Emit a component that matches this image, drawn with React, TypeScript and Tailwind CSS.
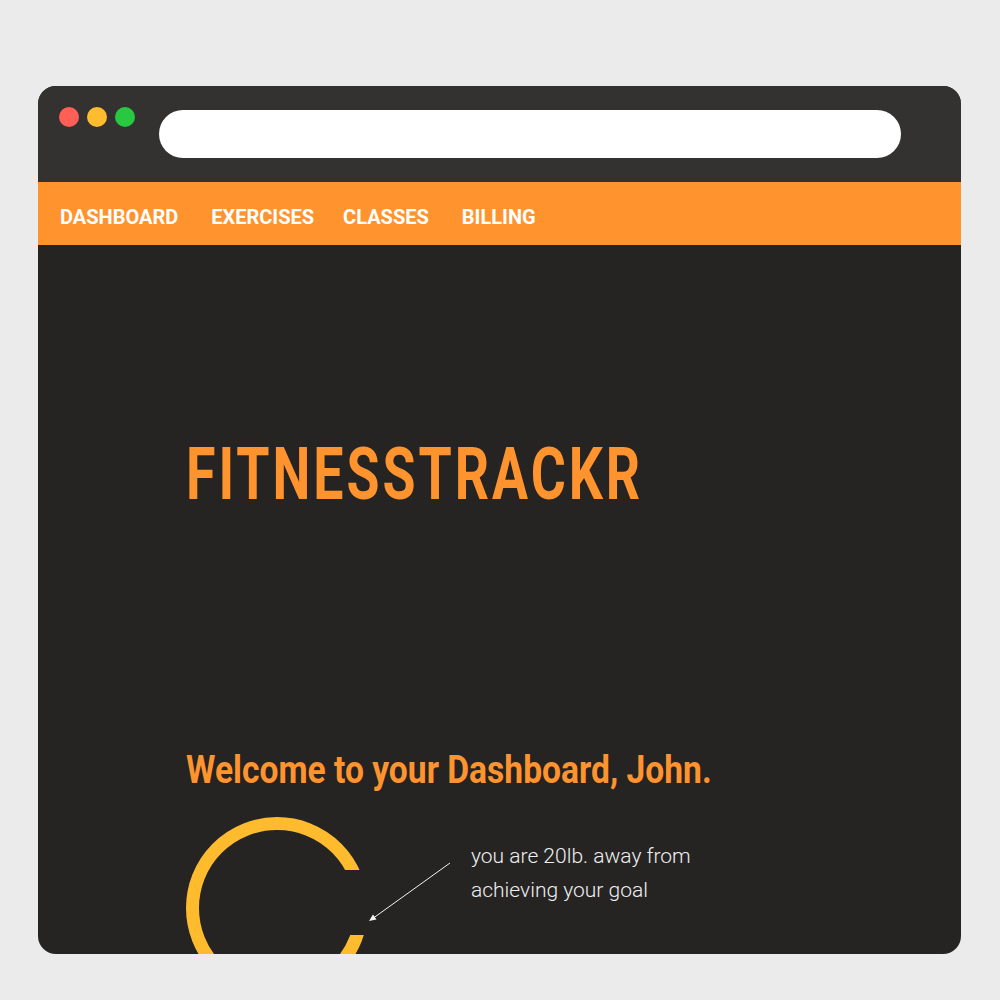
import React from "react";

const navLinks = [
    { label: "DASHBOARD", className: "" },
    { label: "EXERCISES", className: "ml-[33px]" },
    { label: "CLASSES", className: "ml-[29px]" },
    { label: "BILLING", className: "ml-[33px]" },
];

const ProgressRing = () => (
    <svg width="285" height="150" viewBox="0 0 285 150" className="shrink-0 block">
        <circle cx="91" cy="98" r="84.5" fill="none" stroke="#ffbb2e" strokeWidth="13" />
        {/* gap in the ring */}
        <rect x="140" y="60" width="60" height="65" fill="#252423" />
        {/* pointer to the caption */}
        <line x1="264" y1="53" x2="186" y2="109" stroke="#f2f2f2" strokeWidth="1" />
        <polygon points="183,111 190.5,109.5 187,104.5" fill="#f2f2f2" />
    </svg>
);

export default function App() {
    return (
        <div className="min-h-screen bg-[#ebebeb] pt-[86px] pl-[38px]">
            <div className="w-[923px] h-[868px] rounded-[18px] overflow-hidden bg-[#252423] flex flex-col">
                {/* Title bar */}
                <div className="h-[96px] shrink-0 bg-[#333230] flex items-start pt-[21px] pl-[21px]">
                    <div className="flex gap-2">
                        <div className="w-5 h-5 rounded-full bg-[#ff5f57]"></div>
                        <div className="w-5 h-5 rounded-full bg-[#febc2e]"></div>
                        <div className="w-5 h-5 rounded-full bg-[#28c840]"></div>
                    </div>
                    <div className="ml-6 mt-[3px] w-[742px] h-12 rounded-full bg-white"></div>
                </div>

                {/* Nav */}
                <nav className="h-[63px] shrink-0 bg-[#ff932e] flex items-start pt-[25px] pl-[22px] font-['Roboto',sans-serif] font-bold text-[20px] leading-none text-white">
                    {navLinks.map((link) => (
                        <a key={link.label} className={link.className}>
                            {link.label}
                        </a>
                    ))}
                </nav>

                {/* Body */}
                <div className="flex-1 pl-[148px] pt-[194px] font-['Roboto',sans-serif]">
                    {/* no condensed face installed, so squeeze it horizontally */}
                    <h1 className="text-[72px] leading-none font-bold tracking-[4px] text-[#ff932e] scale-x-[0.745] origin-left">
                        FITNESSTRACKR
                    </h1>
                    <h2 className="mt-[240px] text-[38px] leading-none font-bold text-[#ff932e] scale-x-[0.884] origin-left">
                        Welcome to your Dashboard, John.
                    </h2>
                    <div className="mt-[21px] flex items-start">
                        <ProgressRing />
                        <p className="mt-[29px] text-[21px] leading-[34px] font-light text-[#efefef]">
                            you are 20lb. away from
                            <br />
                            achieving your goal
                        </p>
                    </div>
                </div>
            </div>
        </div>
    );
}
